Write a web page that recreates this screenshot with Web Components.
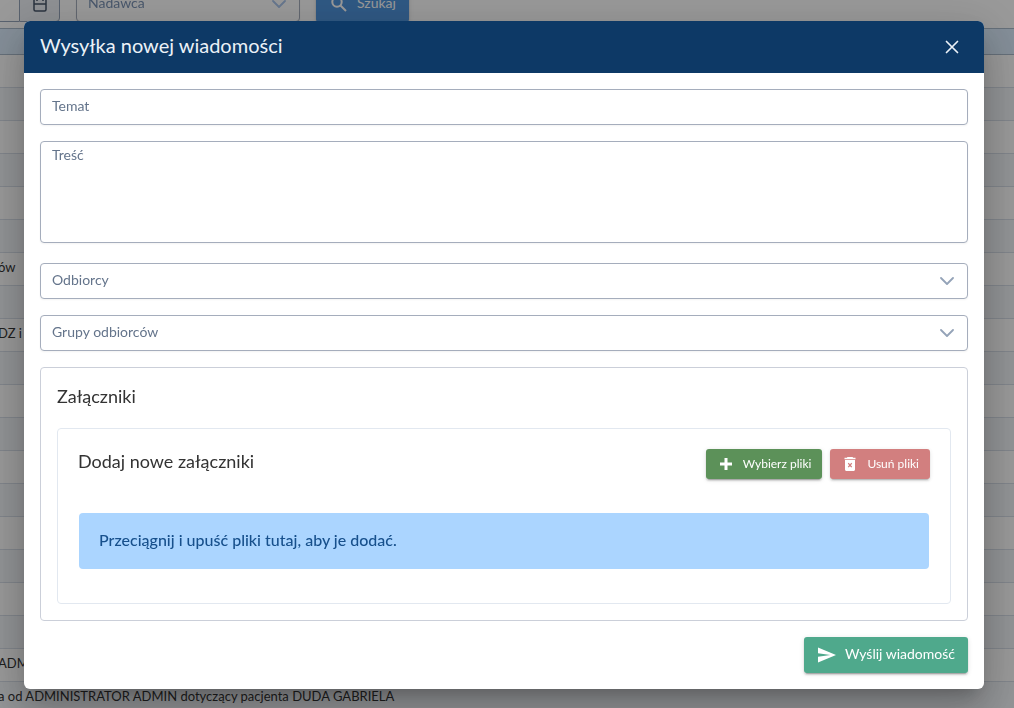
<!DOCTYPE html>
<html lang="pl">
<head>
<meta charset="utf-8">
<meta name="viewport" content="width=device-width, initial-scale=1">
<title>Wysyłka nowej wiadomości</title>
<style>
  body { margin: 0; font-family: Lato, "Noto Sans", sans-serif; font-size: 14px; color: #333; background: #fff; overflow: hidden; }
</style>
</head>
<body>
<messages-page></messages-page>
<modal-layer>
  <modal-dialog heading="Wysyłka nowej wiadomości">
    <text-field label="Temat"></text-field>
    <text-field label="Treść" multiline></text-field>
    <select-field label="Odbiorcy"></select-field>
    <select-field label="Grupy odbiorców"></select-field>
    <attachments-panel heading="Załączniki">
      <file-upload heading="Dodaj nowe załączniki">
        <action-button slot="actions" icon="plus" tone="success" small>Wybierz pliki</action-button>
        <action-button slot="actions" icon="trash" tone="danger" small disabled>Usuń pliki</action-button>
        <info-box>Przeciągnij i upuść pliki tutaj, aby je dodać.</info-box>
      </file-upload>
    </attachments-panel>
    <action-button slot="footer" icon="send" tone="send">Wyślij wiadomość</action-button>
  </modal-dialog>
</modal-layer>
<script>
const ICONS = {
  plus: '<svg viewBox="0 0 12 12" width="12" height="12" aria-hidden="true"><path fill="currentColor" d="M4.500 0h3v4.500H12v3H7.500V12h-3V7.500H0v-3h4.500z"/></svg>',
  trash: '<svg viewBox="0 0 12 14" width="12" height="14" aria-hidden="true"><path fill="currentColor" fill-rule="evenodd" d="M3.500 0h5l.7.800H11.500v1.400H.500V.800h2.300zM1 3h10v9.500c0 .8-.7 1.500-1.500 1.500h-7C1.700 14 1 13.300 1 12.500zM4.700 5.700l-.9.900L5.100 8.200 3.800 9.700l.9.900L6 9.200l1.300 1.400.9-.9L6.900 8.200l1.300-1.600-.9-.9L6 7.200z"/></svg>',
  send: '<svg viewBox="0 0 18 16" width="18" height="16" aria-hidden="true"><path fill="currentColor" d="M0 .5 18 8 0 15.500V9.700L12.500 8 0 6.300z"/></svg>',
  search: '<svg viewBox="0 0 16 16" width="16" height="16" aria-hidden="true"><g fill="none" stroke="currentColor" stroke-width="2"><circle cx="6" cy="6" r="4.700"/><path d="m9.500 9.500 5.500 5.500"/></g></svg>',
  chevron: '<svg viewBox="0 0 14 14" width="14" height="14" aria-hidden="true"><path fill="none" stroke="currentColor" stroke-width="1.800" stroke-linecap="round" stroke-linejoin="round" d="m1 4 6 6 6-6"/></svg>',
  close: '<svg viewBox="0 0 14 14" width="14" height="14" aria-hidden="true"><path fill="none" stroke="currentColor" stroke-width="1.700" stroke-linecap="round" d="m1.500 1.500 11 11m0-11-11 11"/></svg>',
  calendar: '<svg viewBox="0 0 14 16" width="14" height="16" aria-hidden="true"><path fill="none" stroke="currentColor" stroke-width="1.500" d="M2.500 3h9a1.500 1.500 0 0 1 1.500 1.500v9a1.500 1.500 0 0 1-1.500 1.500h-9A1.500 1.500 0 0 1 1 13.500v-9A1.500 1.500 0 0 1 2.500 3zM1 8h12M4 1v4m6-4v4"/></svg>'
};

class Base extends HTMLElement {
  connectedCallback() {
    if (this.shadowRoot) return;
    this.attachShadow({ mode: 'open' }).innerHTML =
      '<style>*{box-sizing:border-box}svg{display:block;flex:none}' + this.css() + '</style>' + this.html();
  }
}

const FIELD_CSS = `
  :host { display: block; }
  .field { display: grid; }
  .field > * { grid-area: 1 / 1; }
  label { padding: 8px 12px; font-size: 14px; line-height: 18px; color: var(--label-color, #64748b); pointer-events: none; z-index: 1; justify-self: start; }
  input, textarea, select { width: 100%; height: 36px; margin: 0; padding: 8px 12px; border: 1px solid #a5adbc; border-radius: 4px;
    background: #fff; font: inherit; color: inherit; appearance: none; resize: none; display: block; box-shadow: 0 1px 2px rgba(18,18,23,.05); }
  textarea { height: 102px; }`;

customElements.define('text-field', class extends Base {
  css() { return FIELD_CSS + ':host([multiline]) { margin-bottom: 4px; } :host([multiline]) label { padding-top: 5px; }'; }
  html() {
    const control = this.hasAttribute('multiline') ? '<textarea id="control"></textarea>' : '<input id="control" type="text">';
    return `<div class="field">${control}<label for="control">${this.getAttribute('label')}</label></div>`;
  }
});

customElements.define('select-field', class extends Base {
  css() { return FIELD_CSS + '.arrow { justify-self: end; align-self: center; padding-right: 14px; color: var(--arrow-color, #94a3b8); pointer-events: none; z-index: 1; }'; }
  html() {
    return `<div class="field"><select id="control"><option></option></select>
      <label for="control">${this.getAttribute('label')}</label><span class="arrow">${ICONS.chevron}</span></div>`;
  }
});

customElements.define('action-button', class extends Base {
  css() { return `
    :host { display: block; }
    button { display: flex; align-items: center; justify-content: center; gap: 9px; height: 36px; padding: 0 13px 0 14px; border: 0; border-radius: 3px;
      background: #4fa98c; color: #fff; font: inherit; font-size: 14px; line-height: 18px; white-space: nowrap;
      box-shadow: 0 3px 1px -2px rgba(0,0,0,.2), 0 2px 2px rgba(0,0,0,.14), 0 1px 5px rgba(0,0,0,.12); }
    .text { padding-bottom: 2px; }
    :host([small]) .text { padding-bottom: 0; }
    :host([small]) button { height: 30px; padding: 0 11px 0 14px; gap: 11px; font-size: 12px; }
    :host([tone=success]) button { background: #5c9159; }
    :host([tone=danger]) button { background: #c75f5f; opacity: .8; }
    :host([tone=primary]) button { background: #4f94dc; padding: 0 13px 0 15px; gap: 10px; }
  `; }
  html() { return `<button type="button"${this.hasAttribute('disabled') ? ' disabled' : ''}>${ICONS[this.getAttribute('icon')]}<span class="text"><slot></slot></span></button>`; }
});

customElements.define('info-box', class extends Base {
  css() { return ':host { display: block; padding: 15px 20px 17px; border-radius: 4px; background: #abd5ff; color: #17508c; font-size: 16px; line-height: 24px; font-weight: 500; }'; }
  html() { return '<slot></slot>'; }
});

customElements.define('file-upload', class extends Base {
  css() { return `
    :host { display: block; border: 1px solid #e2e8f0; border-radius: 4px; padding: 20px 20px 34px; }
    header { display: flex; align-items: flex-start; gap: 8px; margin-bottom: 34px; }
    h3 { margin: 0; flex: 1; font-size: 18px; line-height: 24px; font-weight: 400; }
    .drop { padding: 0 1px; }`; }
  html() { return `<header><h3>${this.getAttribute('heading')}</h3><slot name="actions"></slot></header><div class="drop"><slot></slot></div>`; }
});

customElements.define('attachments-panel', class extends Base {
  css() { return `
    :host { display: block; border: 1px solid #cbcfd9; border-radius: 4px; padding: 16px; }
    h2 { margin: 0 0 20px; font-size: 18px; line-height: 24px; font-weight: 400; }`; }
  html() { return `<h2>${this.getAttribute('heading')}</h2><slot></slot>`; }
});

customElements.define('modal-dialog', class extends Base {
  css() { return `
    :host { display: block; width: 100%; border-radius: 6px; background: #fff; overflow: hidden;
      box-shadow: 0 11px 15px -7px rgba(0,0,0,.2), 0 24px 38px 3px rgba(0,0,0,.14), 0 9px 46px 8px rgba(0,0,0,.12); }
    header { display: flex; align-items: center; justify-content: space-between; height: 52px; padding: 0 16px; background: #0d3966; color: #ebf1f7; }
    h1 { margin: 0; padding-bottom: 4px; font-size: 20px; line-height: 26px; font-weight: 400; }
    header button { display: flex; align-items: center; justify-content: center; width: 32px; height: 32px; padding: 0; border: 0; background: none; color: inherit; }
    .body { display: flex; flex-direction: column; gap: 16px; padding: 16px; }
    footer { display: flex; justify-content: flex-end; padding: 0 16px 16px; }`; }
  html() { return `<header><h1>${this.getAttribute('heading')}</h1><button type="button" aria-label="Zamknij">${ICONS.close}</button></header>
    <div class="body"><slot></slot></div><footer><slot name="footer"></slot></footer>`; }
  connectedCallback() { super.connectedCallback(); this.setAttribute('role', 'dialog'); this.setAttribute('aria-label', this.getAttribute('heading')); }
});

customElements.define('modal-layer', class extends Base {
  css() { return ':host { position: fixed; inset: 0; display: flex; align-items: center; justify-content: center; padding: 21px 30px 19px 24px; box-sizing: border-box; background: rgba(0,0,0,.4); }'; }
  html() { return '<slot></slot>'; }
});

/* Message list behind the dialog, scrolled so that only its lower part shows */
customElements.define('messages-page', class extends Base {
  css() { return `
    :host { display: block; height: 100vh; overflow: hidden; }
    .filters { display: flex; align-items: flex-end; gap: 16px; height: 22px; margin-bottom: 6px; --label-color: #475569; --arrow-color: #64748b; }
    .date { display: flex; width: 60px; }
    .date input { flex: 1; min-width: 0; width: 20px; height: 36px; border: 1px solid #94a3b8; border-width: 1px 0; padding: 0; }
    .date button { display: flex; align-items: center; justify-content: center; width: 41px; height: 36px; padding: 0; border: 1px solid #94a3b8; border-radius: 0 4px 4px 0; background: #eef2f7; color: #475569; }
    select-field { width: 224px; }
    table { width: 100%; border-spacing: 0; table-layout: fixed; }
    th { height: 27px; padding: 0; background: #dcedfd; border: solid #a9bacb; border-width: 1px 0; }
    td { height: 33px; padding: 0 0 4px; border-bottom: 1px solid #d7dee8; font-size: 13px; line-height: 18px; white-space: nowrap; text-indent: -2px; }
    tbody tr:nth-child(even) { background: #f3f6fa; }`; }
  html() {
    const texts = { 7: 'ów', 9: 'DZ i', 19: 'ADM', 20: 'a od ADMINISTRATOR ADMIN dotyczący pacjenta DUDA GABRIELA' };
    let rows = '';
    for (let i = 1; i <= 20; i++) rows += `<tr><td>${texts[i] || ''}</td></tr>`;
    return `<div class="filters"><div class="date"><input type="text" aria-label="Data"><button type="button" aria-label="Kalendarz">${ICONS.calendar}</button></div>
      <select-field label="Nadawca"></select-field><action-button icon="search" tone="primary">Szukaj</action-button></div>
      <table><thead><tr><th></th></tr></thead><tbody>${rows}</tbody></table>`;
  }
});
</script>
</body>
</html>
